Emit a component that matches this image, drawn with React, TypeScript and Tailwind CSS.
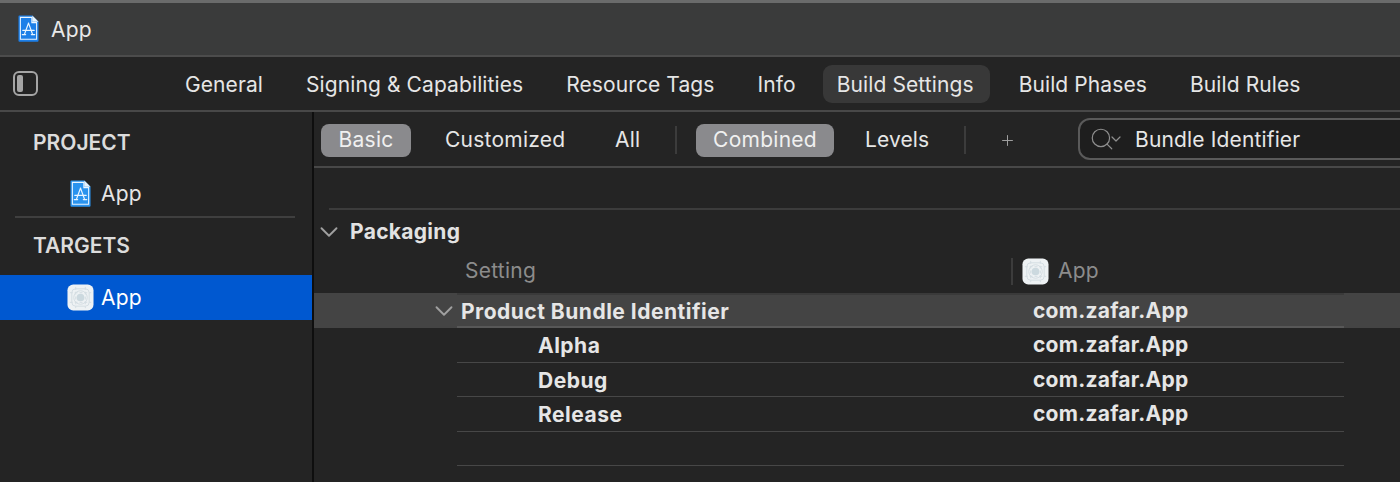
import { ChevronDown, Plus, Search } from 'lucide-react';

const font = { fontFamily: 'Inter, "Noto Sans", sans-serif' };

function ProjectIcon({ size = 24, color = '#1c7fe8' }: { size?: number; color?: string }) {
  return (
    <svg width={size} height={size * 1.3} viewBox="0 0 22 28.6">
      <path d="M1.5 0.5H15L21.5 7V27a1 1 0 0 1-1 1H1.5a1 1 0 0 1-1-1V1.5a1 1 0 0 1 1-1Z" fill={color} />
      <path d="M2.5 2.5H14.5V8H19.5V25.5H2.5Z" fill={color} stroke="#eaf5ff" strokeWidth="1.1" />
      <path d="M15 0.5L21.5 7H15Z" fill="#e8f3fb" />
      <g stroke="#eaf5ff" strokeWidth="1.3" fill="none" strokeLinecap="round">
        <path d="M11 8.5L7 19.5M11 8.5L15 19.5" />
        <path d="M5 16H17" />
        <path d="M4.5 20.5H8M14 20.5H17.5" />
      </g>
    </svg>
  );
}

function TargetIcon({ size = 28 }: { size?: number }) {
  return (
    <svg width={size} height={size} viewBox="0 0 28 28">
      <rect x="0.5" y="0.5" width="27" height="27" rx="6" fill="#eef2f4" />
      <g stroke="#d3dde2" strokeWidth="1" fill="none">
        <rect x="5" y="5" width="18" height="18" rx="4" />
        <circle cx="14" cy="14" r="7" />
        <path d="M9 3V25M19 3V25M3 9H25M3 19H25" strokeDasharray="3 2" />
      </g>
      <circle cx="14" cy="14" r="4" fill="#ccd9df" />
    </svg>
  );
}

const tabs = ['General', 'Signing & Capabilities', 'Resource Tags', 'Info', 'Build Settings', 'Build Phases', 'Build Rules'];

const rows = ['Alpha', 'Debug', 'Release'];

export default function App() {
  return (
    <div className="w-[1400px] h-[482px] overflow-hidden bg-[#242424] text-[#e6e6e6] text-[21px] tracking-[0.25px]" style={font}>
      {/* Title bar */}
      <header className="h-[57px] border-t-[3px] border-b-2 border-t-[#6a6b6b] border-b-[#4c4c4c] bg-[#3a3b3b] flex items-center pl-[18px] gap-[12px]">
        <ProjectIcon size={21} />
        <span className="text-[#e8e8e8] pt-[1px]">App</span>
      </header>

      {/* Tabs */}
      <nav className="h-[55px] border-b-2 border-[#484848] flex items-center">
        <div className="w-[171px] pl-[13px] shrink-0">
          <div className="w-[25px] h-[25px] rounded-[6px] border-2 border-[#a5a5a5] p-[2px]">
            <div className="w-[6px] h-full rounded-[2px] bg-[#a5a5a5]" />
          </div>
        </div>
        <div className="flex items-center gap-[15px] tracking-[0.1px]">
          {tabs.map((t) => (
            <span
              key={t}
              className={`h-[38px] pt-[2px] flex items-center rounded-[9px] whitespace-nowrap ${t === 'Build Settings' ? '-ml-[2px] pl-[14px] pr-[16px] bg-[#383838]' : 'px-[14px]'}`}
            >
              {t}
            </span>
          ))}
        </div>
      </nav>

      <div className="flex h-[370px]">
        {/* Sidebar */}
        <aside className="w-[314px] shrink-0 border-r-2 border-[#0e0e0e] pt-[15px]">
          <div className="h-[32px] flex items-center pl-[33px] font-semibold tracking-normal text-[#dcdcdc]">PROJECT</div>
          <div className="h-[44px] mt-[13px] flex items-center pl-[70px] gap-[10px]">
            <ProjectIcon size={21} color="#2a93ee" />
            App
          </div>
          <div className="h-[2px] bg-[#3f3f3f] ml-[15px] mr-[17px]" />
          <div className="h-[32px] mt-[12px] flex items-center pl-[33px] font-semibold tracking-normal text-[#dcdcdc]">TARGETS</div>
          <div className="h-[45px] mt-[13px] bg-[#0058d0] flex items-center pl-[67px] gap-[7px] text-white">
            <TargetIcon size={27} />
            App
          </div>
        </aside>

        {/* Build settings */}
        <main className="flex-1 min-w-0">
          <div className="h-[56px] pt-[2px] border-b-2 border-[#484848] flex items-center pl-[7px]">
            <span className="h-[33px] w-[90px] rounded-[8px] bg-[#8a8a8d] flex items-center justify-center text-[#f0f0f0]">Basic</span>
            <span className="ml-[34px] w-[119px] whitespace-nowrap">Customized</span>
            <span className="ml-[51px] w-[24px]">All</span>
            <span className="ml-[36px] w-[2px] h-[28px] bg-[#3c3c3c]" />
            <span className="ml-[19px] h-[33px] w-[138px] rounded-[8px] bg-[#8a8a8d] flex items-center justify-center text-[#f0f0f0]">Combined</span>
            <span className="ml-[31px] w-[63px] tracking-[0.1px]">Levels</span>
            <span className="ml-[36px] w-[2px] h-[28px] bg-[#3c3c3c]" />
            <Plus className="ml-[33px] text-[#a0a0a0]" size={17} strokeWidth={1.4} />
            <div className="ml-[62px] h-[42px] -mt-[2px] flex-1 -mr-[20px] rounded-[12px] border-2 border-[#5a5a5a] bg-[#1e1e1e] flex items-center pl-[9px]">
              <Search size={26} strokeWidth={1.1} className="text-[#8f8f8f] shrink-0" />
              <ChevronDown size={16} strokeWidth={1.8} className="text-[#8f8f8f] -ml-[7px] shrink-0" />
              <span className="ml-[11px] pt-[2px] whitespace-nowrap tracking-[0.15px]">Bundle Identifier</span>
            </div>
          </div>

          <div className="h-[42px] ml-[15px] border-b-2 border-[#3c3c3c]" />

          <div className="h-[43px] flex items-center font-bold tracking-[0.3px] text-[#e2e2e2]">
            <ChevronDown size={30} strokeWidth={1.5} className="text-[#a0a0a0] ml-0" />
            <span className="ml-[6px]">Packaging</span>
          </div>

          <div className="h-[36px] flex items-center text-[#8c8c8c]">
            <span className="ml-[151px] w-[546px]">Setting</span>
            <span className="w-[2px] h-[27px] bg-[#3c3c3c]" />
            <span className="ml-[9px] mr-[9px]"><TargetIcon size={27} /></span>
            App
          </div>

          {/* Selected row */}
          <div className="h-[35px] mt-[4px] bg-[#444444] flex items-center font-bold tracking-[0.5px] relative">
            <ChevronDown size={30} strokeWidth={1.5} className="ml-[115px] text-[#a0a0a0]" />
            <span className="ml-[2px] w-[572px] whitespace-nowrap pt-[2px]">Product Bundle Identifier</span>
            <span className="tracking-[0.25px]">com.zafar.App</span>
            <div className="absolute left-[143px] top-0 w-[887px] h-full border-t-2 border-b-2 border-t-[#3a3a3a] border-b-[#585858]" />
          </div>

          {rows.map((r) => (
            <div key={r} className="h-[34.5px] ml-[143px] w-[887px] border-b border-[#474747] flex items-center font-bold tracking-[0.5px]">
              <span className="ml-[81px] w-[495px] pt-[2px]">{r}</span>
              <span className="tracking-[0.25px]">com.zafar.App</span>
            </div>
          ))}
          <div className="h-[34px] ml-[143px] w-[887px] border-b border-[#474747]" />
        </main>
      </div>
    </div>
  );
}
